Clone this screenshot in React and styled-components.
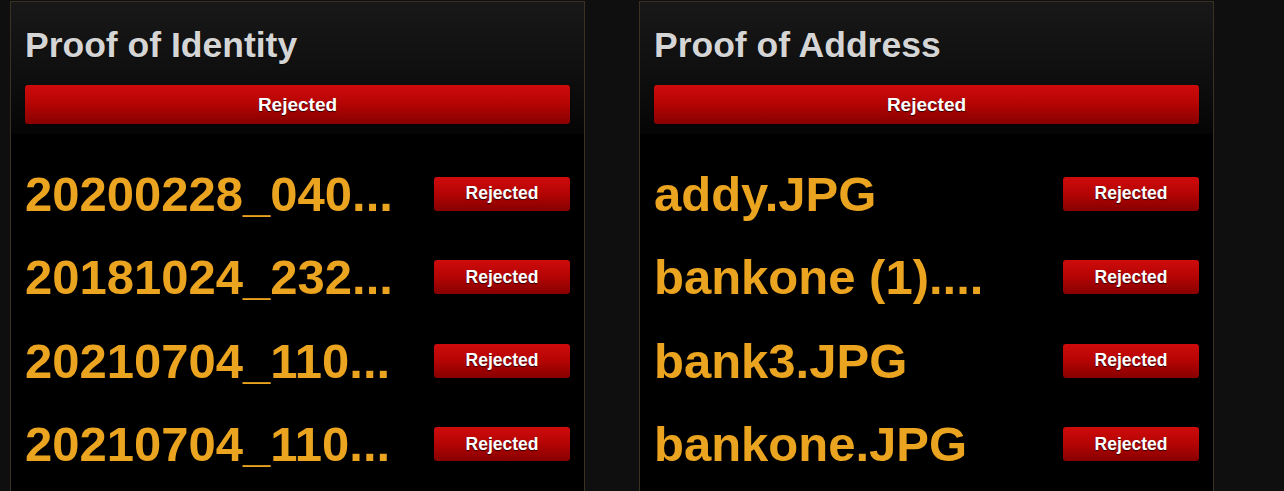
import React from 'react';
import styled, { createGlobalStyle } from 'styled-components';

const GlobalStyle = createGlobalStyle`
  html, body {
    margin: 0;
    padding: 0;
    background: #0f0f0f;
    font-family: "Liberation Sans", Arial, sans-serif;
    overflow: hidden;
  }
`;

// Page wrapper with the two panels side by side
const Page = styled.div`
  display: flex;
  gap: 54px;
  padding: 1px 0 0 10px;
  height: 490px;
  overflow: hidden;
`;

// Bordered document panel
const Panel = styled.section`
  width: 573px;
  border: 1px solid #3a3122;
  border-bottom: none;
  display: flex;
  flex-direction: column;
  background: #000;
`;

// Top part of the panel holding the title and the status bar
const PanelHeader = styled.div`
  padding: 23px 14px 10px 14px;
  background: linear-gradient(to bottom, #181818 0%, #0e0e0e 60%, #050505 100%);
  display: flex;
  flex-direction: column;
  gap: 20px;
`;

const Title = styled.h2`
  margin: 0;
  font-size: 35.5px;
  line-height: 40px;
  font-weight: 700;
  color: #d5d5d5;
  text-shadow: 0 1px 1px rgba(0, 0, 0, 0.6);
`;

// Red gradient status badge; size varies between the header bar and row buttons
const Status = styled.div`
  display: flex;
  align-items: center;
  justify-content: center;
  flex-shrink: 0;
  width: ${p => (p.$wide ? '100%' : '136px')};
  height: ${p => (p.$wide ? '39px' : '34px')};
  box-sizing: border-box;
  border-radius: 3px;
  background: linear-gradient(to bottom, #cf0b0b 0%, #b40404 50%, #870000 100%);
  color: #fff;
  font-size: ${p => (p.$wide ? '19px' : '17.5px')};
  font-weight: 700;
  text-shadow: 0 1px 1px rgba(0, 0, 0, 0.7);
  box-shadow: 0 1px 2px rgba(0, 0, 0, 0.5);
`;

const FileList = styled.ul`
  list-style: none;
  margin: 0;
  padding: 18px 14px 0 14px;
  display: flex;
  flex-direction: column;
`;

const FileRow = styled.li`
  height: 83.5px;
  display: flex;
  align-items: center;
  justify-content: space-between;
  gap: 20px;
`;

const FileName = styled.span`
  font-size: 49px;
  line-height: 48px;
  font-weight: 700;
  color: #eba41f;
  white-space: nowrap;
`;

const panels = [
  {
    title: 'Proof of Identity',
    files: ['20200228_040...', '20181024_232...', '20210704_110...', '20210704_110...'],
  },
  {
    title: 'Proof of Address',
    files: ['addy.JPG', 'bankone (1)....', 'bank3.JPG', 'bankone.JPG'],
  },
];

const App = () => {
  return (
    <>
      <GlobalStyle />
      <Page>
        {panels.map(panel => (
          <Panel key={panel.title}>
            <PanelHeader>
              <Title>{panel.title}</Title>
              <Status $wide>Rejected</Status>
            </PanelHeader>
            <FileList>
              {panel.files.map((file, i) => (
                <FileRow key={i}>
                  <FileName>{file}</FileName>
                  <Status>Rejected</Status>
                </FileRow>
              ))}
            </FileList>
          </Panel>
        ))}
      </Page>
    </>
  );
};

export default App;
